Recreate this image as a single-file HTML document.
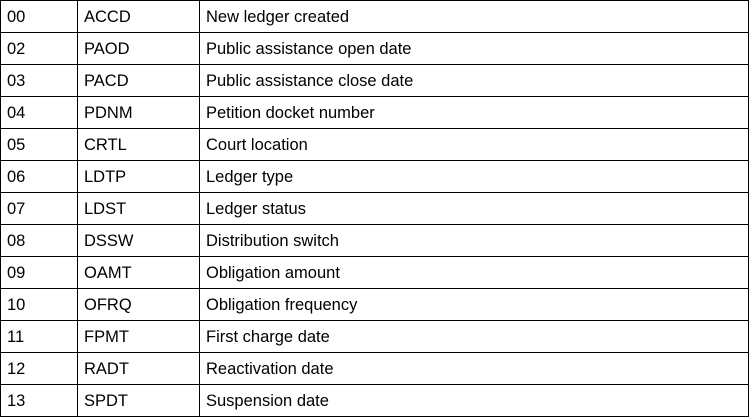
<!DOCTYPE html>
<html><head><style>
body{margin:0;width:749px;height:418px;background:#fff;overflow:hidden;font-family:"Liberation Sans",Arial,sans-serif;font-size:16.5px;color:#000}
table{position:absolute;left:0;top:0;border-collapse:collapse;width:749px}
td{border:1px solid #000;height:32px;padding:0 0 0 6px;vertical-align:middle;box-sizing:border-box;line-height:18px}
td:nth-child(1){width:77px}
td:nth-child(2){width:122px}
</style></head><body>
<table>
<tr><td>00</td><td>ACCD</td><td>New ledger created</td></tr>
<tr><td>02</td><td>PAOD</td><td>Public assistance open date</td></tr>
<tr><td>03</td><td>PACD</td><td>Public assistance close date</td></tr>
<tr><td>04</td><td>PDNM</td><td>Petition docket number</td></tr>
<tr><td>05</td><td>CRTL</td><td>Court location</td></tr>
<tr><td>06</td><td>LDTP</td><td>Ledger type</td></tr>
<tr><td>07</td><td>LDST</td><td>Ledger status</td></tr>
<tr><td>08</td><td>DSSW</td><td>Distribution switch</td></tr>
<tr><td>09</td><td>OAMT</td><td>Obligation amount</td></tr>
<tr><td>10</td><td>OFRQ</td><td>Obligation frequency</td></tr>
<tr><td>11</td><td>FPMT</td><td>First charge date</td></tr>
<tr><td>12</td><td>RADT</td><td>Reactivation date</td></tr>
<tr><td>13</td><td>SPDT</td><td>Suspension date</td></tr>
</table>
</body></html>
